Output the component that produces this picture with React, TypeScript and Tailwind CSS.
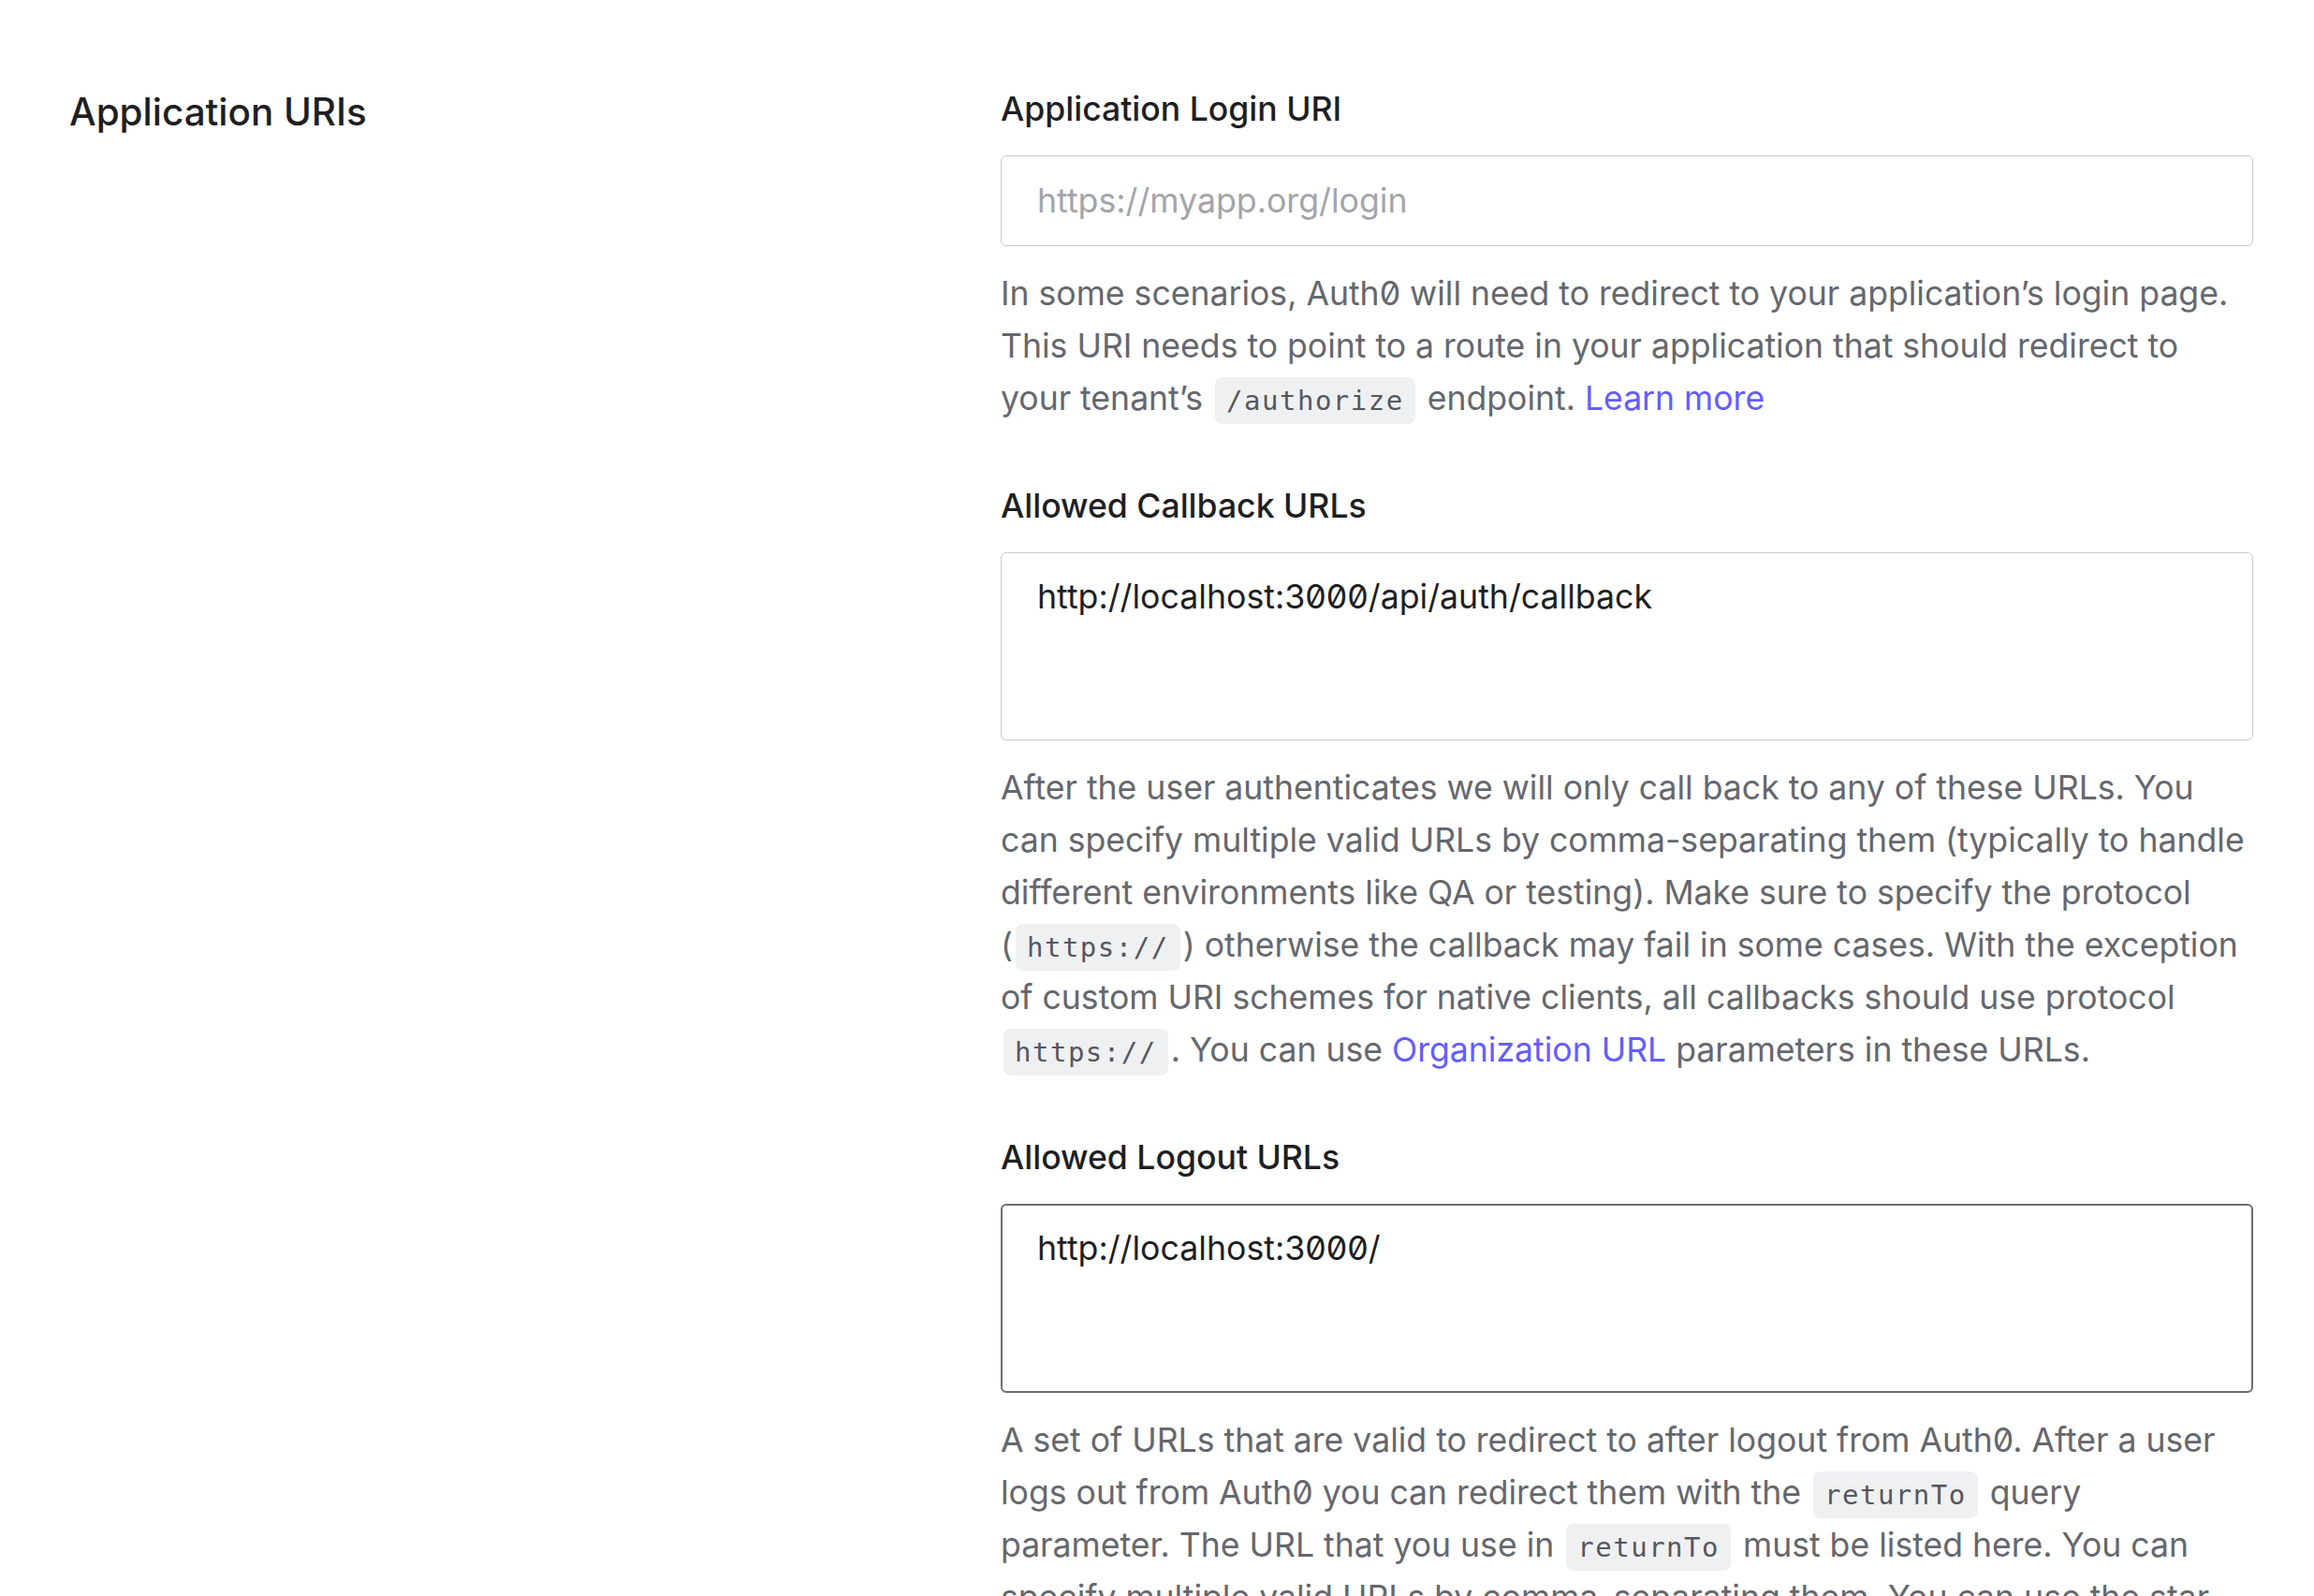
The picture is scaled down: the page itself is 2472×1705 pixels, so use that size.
import React from "react";

function Code({ children }: { children: React.ReactNode }) {
  return (
    <code className="mx-[3px] rounded-lg bg-[#eff0f2] px-[12px] py-[8px] font-['DejaVu_Sans_Mono',monospace] text-[29px] leading-none tracking-[1.5px] text-[#55575e]">
      {children}
    </code>
  );
}

function Link({ children }: { children: React.ReactNode }) {
  return <a className="text-[#635dff]">{children}</a>;
}

function Help({ children }: { children: React.ReactNode }) {
  return (
    <p className="mt-[23px] text-[35.6px] leading-[56px] text-[#65676e]">{children}</p>
  );
}

function Label({ children }: { children: React.ReactNode }) {
  return (
    <div className="text-[35.6px] font-medium leading-[40px] text-[#1e1f23]">{children}</div>
  );
}

export default function App() {
  return (
    <div className="min-h-screen bg-white font-['Inter',sans-serif] slashed-zero">
      <div className="flex pl-[74px] pr-[65px] pt-[97px]">
        <div className="w-[995px] shrink-0">
          <h2 className="text-[40.4px] font-medium leading-[46px] text-[#1e1f23]">
            Application URIs
          </h2>
        </div>

        <div className="flex-1">
          <Label>Application Login URI</Label>
          <div className="mt-[29px] flex h-[97px] items-center rounded-md border border-[#c9cacf] px-[38px]">
            <span className="text-[35.7px] text-[#a3a4aa]">https://myapp.org/login</span>
          </div>
          <Help>
            In some scenarios, Auth0 will need to redirect to your application’s login page.
            This URI needs to point to a route in your application that should redirect to
            your tenant’s <Code>/authorize</Code> endpoint. <Link>Learn more</Link>
          </Help>

          <div className="mt-[67px]">
            <Label>Allowed Callback URLs</Label>
          </div>
          <div className="mt-[29px] h-[201px] rounded-md border border-[#c9cacf] px-[38px] pt-[24px]">
            <div className="text-[35.7px] leading-[44px] text-[#1e1f23]">
              http://localhost:3000/api/auth/callback
            </div>
          </div>
          <Help>
            After the user authenticates we will only call back to any of these URLs. You can
            specify multiple valid URLs by comma-separating them (typically to handle different
            environments like QA or testing). Make sure to specify the protocol (<Code>https://</Code>)
            otherwise the callback may fail in some cases. With the exception of custom URI
            schemes for native clients, all callbacks should use protocol <Code>https://</Code>.
            You can use <Link>Organization URL</Link> parameters in these URLs.
          </Help>

          <div className="mt-[67px]">
            <Label>Allowed Logout URLs</Label>
          </div>
          <div className="mt-[29px] h-[202px] rounded-md border-2 border-[#6b6c72] px-[37px] pt-[23px]">
            <div className="text-[35.7px] leading-[44px] text-[#1e1f23]">http://localhost:3000/</div>
          </div>
          <Help>
            A set of URLs that are valid to redirect to after logout from Auth0. After a user logs
            out from Auth0 you can redirect them with the <Code>returnTo</Code> query parameter. The
            URL that you use in <Code>returnTo</Code> must be listed here. You can specify multiple
            valid URLs by comma-separating them. You can use the star symbol as a wildcard for
            subdomains (<Code>*.google.com</Code>). Query strings and hash information are not
            taken into account when validating these URLs.
          </Help>
        </div>
      </div>
    </div>
  );
}
